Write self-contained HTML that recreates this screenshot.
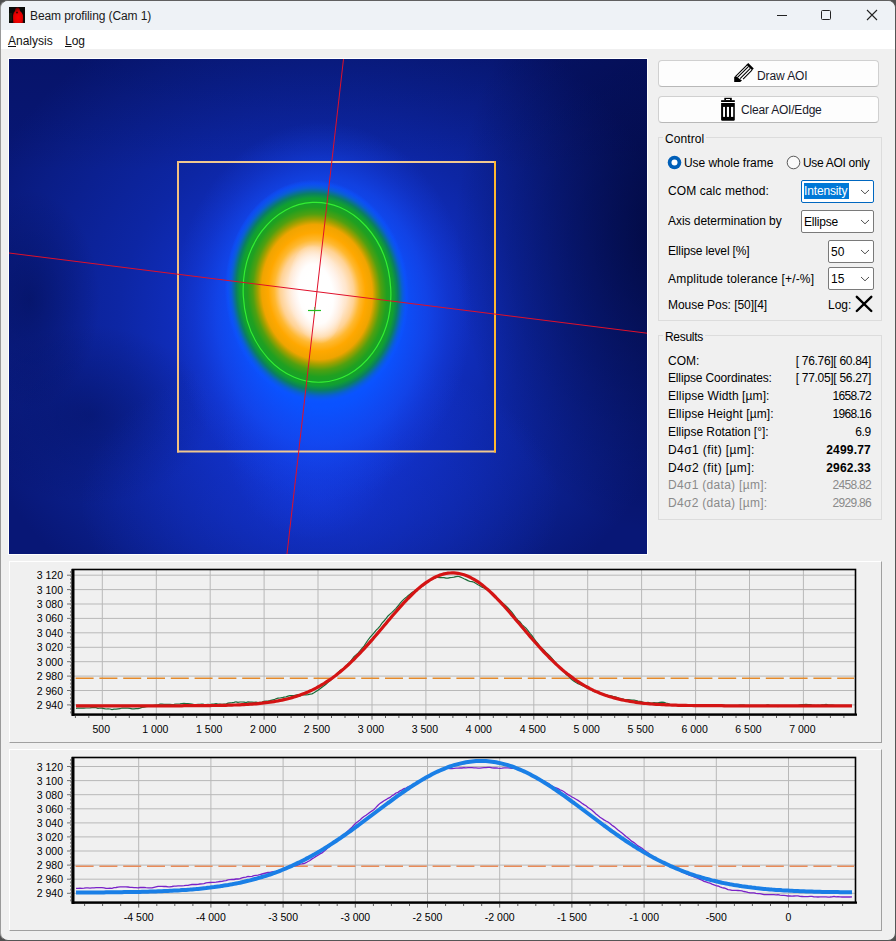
<!DOCTYPE html>
<html><head><meta charset="utf-8">
<style>
html,body{margin:0;padding:0;}
body{width:896px;height:941px;overflow:hidden;background:#505050;position:relative;font-family:"Liberation Sans",sans-serif;font-size:12px;color:#000;}
.win{position:absolute;left:0;top:0;width:894px;height:939px;border:1px solid #555;border-left-color:#9a9a9a;border-top-color:#606060;border-radius:8px;background:#f0f0f0;overflow:hidden;}
.abs{position:absolute;white-space:nowrap;}
.title{position:absolute;left:0;top:0;width:896px;height:29px;background:#eef2f6;}
.menu{position:absolute;left:0;top:29px;width:896px;height:19px;background:#ffffff;}
.btn{position:absolute;left:658px;width:221px;background:#fdfdfd;border:1px solid #d0d0d0;border-bottom-color:#b8b8b8;border-radius:4px;box-sizing:border-box;}
.grp{position:absolute;border:1px solid #dcdcdc;box-sizing:border-box;}
.gl{position:absolute;background:#f0f0f0;padding:0 2px;white-space:nowrap;}
.combo{position:absolute;background:#fff;border:1px solid #7a7a7a;border-radius:2px;box-sizing:border-box;}
.combo .chev{position:absolute;right:3px;top:8px;line-height:0;}
.lbl{position:absolute;white-space:nowrap;}
.res{position:absolute;left:668px;width:203px;height:18px;white-space:nowrap;}
.res .v{position:absolute;right:0;top:0;}
.panel{position:absolute;left:9px;width:873px;box-sizing:border-box;border-top:1px solid #ffffff;border-left:1px solid #ffffff;border-bottom:1px solid #a0a0a0;border-right:1px solid #a0a0a0;}
svg text{font-family:"Liberation Sans",sans-serif;font-size:10.5px;fill:#000;}
</style></head><body>
<div class="win">
 <div class="title"></div>
 <div class="menu"></div>
</div>
<!-- title icon -->
<svg class="abs" style="left:9px;top:7px" width="16" height="16" viewBox="0 0 16 16">
 <defs><radialGradient id="icg" cx="0.5" cy="0.65" r="0.6"><stop offset="0" stop-color="#ff0000"/><stop offset="0.7" stop-color="#e00000"/><stop offset="1" stop-color="#700000"/></radialGradient></defs>
 <rect width="16" height="16" fill="#0a0a08"/>
 <path d="M4 16 L4 8 Q4.5 5 6 4 Q6 0.5 8.5 0.5 Q11 0.5 11 4 Q12.8 5 14 8 L14.2 16 Z" fill="url(#icg)"/>
 <circle cx="8" cy="5.5" r="1.1" fill="#500000"/>
 <rect x="0" y="6" width="3" height="8" fill="#1a2a18" opacity="0.6"/>
</svg>
<div class="abs" style="left:30px;top:8.5px;font-size:12px;letter-spacing:-0.1px;color:#1a1a1a">Beam profiling (Cam 1)</div>
<!-- window controls -->
<div class="abs" style="left:777px;top:15px;width:10px;height:1px;background:#222"></div>
<div class="abs" style="left:821px;top:10px;width:8px;height:8px;border:1px solid #222;border-radius:1.5px"></div>
<svg class="abs" style="left:866px;top:9px" width="12" height="12" viewBox="0 0 12 12"><path d="M1 1 L11 11 M11 1 L1 11" stroke="#222" stroke-width="1.1"/></svg>
<!-- menu -->
<div class="abs" style="left:8px;top:34px;color:#111"><span style="text-decoration:underline">A</span>nalysis</div>
<div class="abs" style="left:65px;top:34px;color:#111"><span style="text-decoration:underline">L</span>og</div>

<!-- beam image -->
<svg class="abs" style="left:0;top:0" width="896" height="941" viewBox="0 0 896 941">
<rect x="8" y="58" width="640" height="497" fill="#ffffff"/>
<defs>
<radialGradient id="vig" gradientUnits="userSpaceOnUse" cx="0" cy="0" r="1" gradientTransform="translate(322 320) scale(370 340)">
<stop offset="0" stop-color="#1644e8"/>
<stop offset="0.3" stop-color="#1131c8"/>
<stop offset="0.55" stop-color="#0d26a4"/>
<stop offset="0.85" stop-color="#0a1d86"/>
<stop offset="1" stop-color="#081776"/>
</radialGradient>
<radialGradient id="dark" gradientUnits="userSpaceOnUse" cx="0" cy="0" r="1" gradientTransform="translate(665 235) scale(210 300)">
<stop offset="0" stop-color="#000530" stop-opacity="0.75"/>
<stop offset="0.55" stop-color="#000530" stop-opacity="0.35"/>
<stop offset="1" stop-color="#000530" stop-opacity="0"/>
</radialGradient>
<linearGradient id="topd" gradientUnits="userSpaceOnUse" x1="0" y1="59" x2="0" y2="170">
<stop offset="0" stop-color="#000840" stop-opacity="0.22"/>
<stop offset="1" stop-color="#000840" stop-opacity="0"/>
</linearGradient>
<radialGradient id="dark2" gradientUnits="userSpaceOnUse" cx="0" cy="0" r="1" gradientTransform="translate(90 415) scale(120 90)">
<stop offset="0" stop-color="#000840" stop-opacity="0.35"/>
<stop offset="1" stop-color="#000840" stop-opacity="0"/>
</radialGradient>
<radialGradient id="dark3" gradientUnits="userSpaceOnUse" cx="0" cy="0" r="1" gradientTransform="translate(30 300) scale(70 110)">
<stop offset="0" stop-color="#000840" stop-opacity="0.4"/>
<stop offset="1" stop-color="#000840" stop-opacity="0"/>
</radialGradient>
<radialGradient id="halo" gradientUnits="userSpaceOnUse" cx="0" cy="0" r="1" gradientTransform="translate(322 312) scale(150 190)">
<stop offset="0" stop-color="#0a55ff" stop-opacity="1"/>
<stop offset="0.5" stop-color="#0a52ff" stop-opacity="1"/>
<stop offset="0.7" stop-color="#124cf6" stop-opacity="0.65"/>
<stop offset="0.85" stop-color="#1444ea" stop-opacity="0.3"/>
<stop offset="1" stop-color="#1440e0" stop-opacity="0"/>
</radialGradient>
<radialGradient id="halo2" gradientUnits="userSpaceOnUse" cx="0" cy="0" r="1" gradientTransform="translate(312 430) scale(90 110)">
<stop offset="0" stop-color="#1448f8" stop-opacity="0.5"/>
<stop offset="1" stop-color="#1448f8" stop-opacity="0"/>
</radialGradient>
<radialGradient id="core" gradientUnits="userSpaceOnUse" cx="0" cy="0" r="1" gradientTransform="translate(317 292) rotate(-3) scale(92 112.5)">
<stop offset="0" stop-color="#ffffff"/>
<stop offset="0.16" stop-color="#ffffff"/>
<stop offset="0.24" stop-color="#fff2ea"/>
<stop offset="0.32" stop-color="#ffe6cc"/>
<stop offset="0.4" stop-color="#ffd294"/>
<stop offset="0.464" stop-color="#ffb830"/>
<stop offset="0.528" stop-color="#ffa800"/>
<stop offset="0.6" stop-color="#f0a400"/>
<stop offset="0.646" stop-color="#a0a000"/>
<stop offset="0.695" stop-color="#50a010"/>
<stop offset="0.755" stop-color="#20a020"/>
<stop offset="0.834" stop-color="#10a030"/>
<stop offset="0.876" stop-color="#0a8060"/>
<stop offset="0.925" stop-color="#0a60d0"/>
<stop offset="0.97" stop-color="#0a55ff" stop-opacity="0.5"/>
<stop offset="1" stop-color="#0a55ff" stop-opacity="0"/>
</radialGradient>
<radialGradient id="wcore" gradientUnits="userSpaceOnUse" cx="0" cy="0" r="1" gradientTransform="translate(316 294) rotate(-4) scale(28 50)">
<stop offset="0" stop-color="#ffffff" stop-opacity="1"/>
<stop offset="0.6" stop-color="#ffffff" stop-opacity="0.9"/>
<stop offset="0.85" stop-color="#fff4ee" stop-opacity="0.4"/>
<stop offset="1" stop-color="#fff0e0" stop-opacity="0"/>
</radialGradient>
<radialGradient id="botg" gradientUnits="userSpaceOnUse" cx="0" cy="0" r="1" gradientTransform="translate(320 500) scale(240 150)">
<stop offset="0" stop-color="#1a42ff" stop-opacity="0.45"/>
<stop offset="0.6" stop-color="#1a42ff" stop-opacity="0.2"/>
<stop offset="1" stop-color="#1a42ff" stop-opacity="0"/>
</radialGradient>
</defs>
<rect x="9" y="59" width="638" height="495" fill="url(#vig)"/>
<rect x="9" y="59" width="638" height="495" fill="url(#dark)"/>
<rect x="9" y="59" width="638" height="495" fill="url(#topd)"/>
<rect x="9" y="59" width="638" height="495" fill="url(#dark2)"/>
<rect x="9" y="59" width="638" height="495" fill="url(#dark3)"/>
<rect x="9" y="59" width="638" height="495" fill="url(#botg)"/>
<ellipse cx="312" cy="430" rx="90" ry="110" fill="url(#halo2)"/>
<ellipse cx="322" cy="312" rx="150" ry="190" fill="url(#halo)"/>
<ellipse cx="317" cy="292" rx="92" ry="112.5" fill="url(#core)" transform="rotate(-3 317 292)"/>
<ellipse cx="316" cy="294" rx="28" ry="50" fill="url(#wcore)" transform="rotate(-4 316 294)"/>
<ellipse cx="317" cy="292.3" rx="73.8" ry="90" fill="none" stroke="#33ee33" stroke-width="1.2" transform="rotate(-3 317 292)"/>
<line x1="177" y1="162" x2="496" y2="162" stroke="#f0c890" stroke-width="2"/>
<line x1="177" y1="451.5" x2="496" y2="451.5" stroke="#f0c890" stroke-width="2"/>
<line x1="178" y1="161" x2="178" y2="452.5" stroke="#f3c080" stroke-width="2"/>
<line x1="495" y1="161" x2="495" y2="452.5" stroke="#ffb830" stroke-width="2"/>
<line x1="343.5" y1="59" x2="287" y2="554" stroke="#e0102a" stroke-width="1"/>
<line x1="9" y1="253" x2="647" y2="333.2" stroke="#e0102a" stroke-width="1"/>
<line x1="308" y1="310.5" x2="321" y2="310.5" stroke="#20c020" stroke-width="1.2"/>
<line x1="314.5" y1="307" x2="314.5" y2="314" stroke="#20c020" stroke-width="0.6"/>
</svg>

<!-- buttons -->
<div class="btn" style="top:60px;height:27px"></div>
<svg class="abs" style="left:728px;top:60px" width="30" height="26" viewBox="728 60 30 26">
 <path d="M735.6 76.4 L747.4 64.6 M737.3 77.7 L748.6 66.4 M740.1 78.6 L750.3 68.4 M743.1 79.1 L752 70.2" stroke="#000" stroke-width="1.05"/>
 <path d="M747.4 63.9 L752.9 69.4" stroke="#000" stroke-width="2.4" stroke-linecap="butt"/>
 <path d="M734.2 77 L734.2 81.9 L740.2 81.9 L742 80.6 L737.6 77.6 L735.8 76 Z" fill="#000"/>
</svg>
<div class="abs" style="left:757px;top:69px;letter-spacing:-0.1px;color:#1a1a2a">Draw AOI</div>
<div class="btn" style="top:96px;height:27px"></div>
<svg class="abs" style="left:716px;top:94px" width="26" height="30" viewBox="716 94 26 30">
 <rect x="724.3" y="97.8" width="7.5" height="2.8" fill="#000"/>
 <rect x="726" y="99" width="4" height="1" fill="#fff"/>
 <rect x="721.1" y="100.2" width="13.7" height="1.8" fill="#000"/>
 <path d="M721.1 103.1 L734.8 103.1 L734.8 120 L734 120.8 L721.9 120.8 L721.1 120 Z" fill="#000"/>
 <rect x="723.1" y="106.9" width="1.9" height="10" fill="#fff"/>
 <rect x="726.9" y="106.9" width="2.1" height="10" fill="#fff"/>
 <rect x="731" y="106.9" width="2.2" height="10" fill="#fff"/>
</svg>
<div class="abs" style="left:741px;top:103px;letter-spacing:-0.2px;color:#1a1a2a">Clear AOI/Edge</div>

<!-- control group -->
<div class="grp" style="left:658px;top:137px;width:224px;height:184px"></div>
<div class="gl" style="left:663px;top:131.5px;letter-spacing:0.1px">Control</div>
<svg class="abs" style="left:667px;top:155px" width="15" height="15" viewBox="0 0 15 15"><circle cx="7.5" cy="7.5" r="6.8" fill="#005fb8"/><circle cx="7.5" cy="7.5" r="3" fill="#fff"/></svg>
<div class="lbl" style="left:684px;top:156px;letter-spacing:-0.05px">Use whole frame</div>
<svg class="abs" style="left:786px;top:155px" width="15" height="15" viewBox="0 0 15 15"><circle cx="7.5" cy="7.5" r="6.3" fill="#fafafa" stroke="#5a5a5a" stroke-width="1"/></svg>
<div class="lbl" style="left:803px;top:156px;letter-spacing:-0.3px">Use AOI only</div>

<div class="lbl" style="left:668px;top:184px;letter-spacing:0.1px">COM calc method:</div>
<div class="combo" style="left:801px;top:180px;width:73px;height:23px;border-color:#0067c0;border-width:1px"><div style="position:absolute;left:2px;top:2px;width:45px;height:16px;background:#0078d7"></div><div class="abs" style="left:2px;top:3px;color:#fff;letter-spacing:-0.15px">Intensity</div><div class="chev" style="top:8px"><svg width="10" height="6" viewBox="0 0 10 6"><path d="M1 1 L5 4.8 L9 1" fill="none" stroke="#505050" stroke-width="1"/></svg></div></div>
<div class="lbl" style="left:668px;top:214px;letter-spacing:-0.05px">Axis determination by</div>
<div class="combo" style="left:801px;top:210px;width:73px;height:23px"><div class="abs" style="left:2px;top:4px;letter-spacing:-0.2px">Ellipse</div><div class="chev"><svg width="10" height="6" viewBox="0 0 10 6"><path d="M1 1 L5 4.8 L9 1" fill="none" stroke="#505050" stroke-width="1"/></svg></div></div>
<div class="lbl" style="left:668px;top:244px;letter-spacing:-0.15px">Ellipse level [%]</div>
<div class="combo" style="left:828px;top:240px;width:46px;height:23px"><div class="abs" style="left:2px;top:4px">50</div><div class="chev"><svg width="10" height="6" viewBox="0 0 10 6"><path d="M1 1 L5 4.8 L9 1" fill="none" stroke="#505050" stroke-width="1"/></svg></div></div>
<div class="lbl" style="left:668px;top:272px;letter-spacing:0.2px">Amplitude tolerance [+/-%]</div>
<div class="combo" style="left:828px;top:267px;width:46px;height:23px"><div class="abs" style="left:2px;top:4px">15</div><div class="chev"><svg width="10" height="6" viewBox="0 0 10 6"><path d="M1 1 L5 4.8 L9 1" fill="none" stroke="#505050" stroke-width="1"/></svg></div></div>
<div class="lbl" style="left:668px;top:298px;letter-spacing:-0.05px">Mouse Pos: [50][4]</div>
<div class="lbl" style="left:828px;top:298px;letter-spacing:0px">Log:</div>
<svg class="abs" style="left:850px;top:290px" width="30" height="28" viewBox="850 290 30 28"><path d="M856.8 296.8 L871.3 311 M871.3 296.8 L856.8 311" stroke="#000" stroke-width="2.4" stroke-linecap="round"/></svg>

<!-- results group -->
<div class="grp" style="left:658px;top:335px;width:224px;height:185px"></div>
<div class="gl" style="left:663px;top:329.5px;letter-spacing:-0.3px">Results</div>
<div class="res" style="top:353.50px">COM:<span class="v" style="letter-spacing:-0.3px">[ 76.76][ 60.84]</span></div>
<div class="res" style="top:371.35px;letter-spacing:-0.15px">Ellipse Coordinates:<span class="v" style="letter-spacing:-0.3px">[ 77.05][ 56.27]</span></div>
<div class="res" style="top:389.20px;letter-spacing:0.1px">Ellipse Width [µm]:<span class="v" style="letter-spacing:-0.7px">1658.72</span></div>
<div class="res" style="top:407.05px;letter-spacing:0.1px">Ellipse Height [µm]:<span class="v" style="letter-spacing:-0.7px">1968.16</span></div>
<div class="res" style="top:424.90px;letter-spacing:-0.05px">Ellipse Rotation [°]:<span class="v" style="letter-spacing:-0.3px">6.9</span></div>
<div class="res" style="top:442.75px;letter-spacing:0.4px">D4σ1 (fit) [µm]:<span class="v" style="font-weight:bold;letter-spacing:0.2px">2499.77</span></div>
<div class="res" style="top:460.60px;letter-spacing:0.4px">D4σ2 (fit) [µm]:<span class="v" style="font-weight:bold;letter-spacing:0.2px">2962.33</span></div>
<div class="res" style="top:478.45px;color:#8a8a8a;letter-spacing:0.3px">D4σ1 (data) [µm]:<span class="v" style="letter-spacing:-0.7px">2458.82</span></div>
<div class="res" style="top:496.30px;color:#8a8a8a;letter-spacing:0.3px">D4σ2 (data) [µm]:<span class="v" style="letter-spacing:-0.7px">2929.86</span></div>

<!-- chart panels -->
<div class="panel" style="top:561px;height:182px"></div>
<div class="panel" style="top:749px;height:182px"></div>
<svg class="abs" style="left:0;top:0" width="896" height="941" viewBox="0 0 896 941">
<rect x="72" y="569" width="784" height="146" fill="#f0f0f0"/>
<line x1="72" y1="704.9" x2="856" y2="704.9" stroke="#b8b8b8" stroke-width="1"/>
<line x1="72" y1="690.5" x2="856" y2="690.5" stroke="#b8b8b8" stroke-width="1"/>
<line x1="72" y1="676.1" x2="856" y2="676.1" stroke="#b8b8b8" stroke-width="1"/>
<line x1="72" y1="661.7" x2="856" y2="661.7" stroke="#b8b8b8" stroke-width="1"/>
<line x1="72" y1="647.3" x2="856" y2="647.3" stroke="#b8b8b8" stroke-width="1"/>
<line x1="72" y1="632.8" x2="856" y2="632.8" stroke="#b8b8b8" stroke-width="1"/>
<line x1="72" y1="618.4" x2="856" y2="618.4" stroke="#b8b8b8" stroke-width="1"/>
<line x1="72" y1="604.0" x2="856" y2="604.0" stroke="#b8b8b8" stroke-width="1"/>
<line x1="72" y1="589.6" x2="856" y2="589.6" stroke="#b8b8b8" stroke-width="1"/>
<line x1="72" y1="575.2" x2="856" y2="575.2" stroke="#b8b8b8" stroke-width="1"/>
<line x1="102.3" y1="569" x2="102.3" y2="715" stroke="#b8b8b8" stroke-width="1"/>
<line x1="156.3" y1="569" x2="156.3" y2="715" stroke="#b8b8b8" stroke-width="1"/>
<line x1="210.2" y1="569" x2="210.2" y2="715" stroke="#b8b8b8" stroke-width="1"/>
<line x1="264.1" y1="569" x2="264.1" y2="715" stroke="#b8b8b8" stroke-width="1"/>
<line x1="318.0" y1="569" x2="318.0" y2="715" stroke="#b8b8b8" stroke-width="1"/>
<line x1="372.0" y1="569" x2="372.0" y2="715" stroke="#b8b8b8" stroke-width="1"/>
<line x1="425.9" y1="569" x2="425.9" y2="715" stroke="#b8b8b8" stroke-width="1"/>
<line x1="479.8" y1="569" x2="479.8" y2="715" stroke="#b8b8b8" stroke-width="1"/>
<line x1="533.8" y1="569" x2="533.8" y2="715" stroke="#b8b8b8" stroke-width="1"/>
<line x1="587.7" y1="569" x2="587.7" y2="715" stroke="#b8b8b8" stroke-width="1"/>
<line x1="641.6" y1="569" x2="641.6" y2="715" stroke="#b8b8b8" stroke-width="1"/>
<line x1="695.6" y1="569" x2="695.6" y2="715" stroke="#b8b8b8" stroke-width="1"/>
<line x1="749.5" y1="569" x2="749.5" y2="715" stroke="#b8b8b8" stroke-width="1"/>
<line x1="803.4" y1="569" x2="803.4" y2="715" stroke="#b8b8b8" stroke-width="1"/>
<line x1="75.6" y1="678.3" x2="854" y2="678.3" stroke="#e48a2a" stroke-width="1.5" stroke-dasharray="18,5.8"/>
<path d="M76.0,708.3 L78.0,708.0 L80.0,708.2 L82.0,708.2 L84.0,708.1 L86.0,708.0 L88.0,708.0 L90.0,707.9 L92.0,707.7 L94.0,707.7 L96.0,707.6 L98.0,708.3 L100.0,708.0 L102.0,708.2 L104.0,708.6 L106.0,709.0 L108.0,708.8 L110.0,709.0 L112.0,709.6 L114.0,709.2 L116.0,709.1 L118.0,708.9 L120.0,708.7 L122.0,708.0 L124.0,708.2 L126.0,708.1 L128.0,708.1 L130.0,708.4 L132.0,708.8 L134.0,708.9 L136.0,708.7 L138.0,708.6 L140.0,708.1 L142.0,707.4 L144.0,707.2 L146.0,706.6 L148.0,706.4 L150.0,706.4 L152.0,706.1 L154.0,705.4 L156.0,705.2 L158.0,705.1 L160.0,704.0 L162.0,704.1 L164.0,704.3 L166.0,704.3 L168.0,704.3 L170.0,704.4 L172.0,704.7 L174.0,704.4 L176.0,704.0 L178.0,704.0 L180.0,703.9 L182.0,703.5 L184.0,703.4 L186.0,703.6 L188.0,703.6 L190.0,703.9 L192.0,704.2 L194.0,704.5 L196.0,704.5 L198.0,704.3 L200.0,704.3 L202.0,704.0 L204.0,704.4 L206.0,704.5 L208.0,704.4 L210.0,704.5 L212.0,704.1 L214.0,704.0 L216.0,703.7 L218.0,704.1 L220.0,704.2 L222.0,704.3 L224.0,704.0 L226.0,704.0 L228.0,703.2 L230.0,702.8 L232.0,702.7 L234.0,702.4 L236.0,701.8 L238.0,702.3 L240.0,702.0 L242.0,702.0 L244.0,702.1 L246.0,702.6 L248.0,701.9 L250.0,702.1 L252.0,702.2 L254.0,702.4 L256.0,702.2 L258.0,702.6 L260.0,702.3 L262.0,702.0 L264.0,701.3 L266.0,701.1 L268.0,701.0 L270.0,700.6 L272.0,700.1 L274.0,699.7 L276.0,698.8 L278.0,698.1 L280.0,698.0 L282.0,697.7 L284.0,697.1 L286.0,696.8 L288.0,696.2 L290.0,695.7 L292.0,695.6 L294.0,695.6 L296.0,695.1 L298.0,694.6 L300.0,695.8 L302.0,694.9 L304.0,694.8 L306.0,694.8 L308.0,694.6 L310.0,694.2 L312.0,693.9 L314.0,692.8 L316.0,691.5 L318.0,690.3 L320.0,688.7 L322.0,687.2 L324.0,685.7 L326.0,684.3 L328.0,682.4 L330.0,680.7 L332.0,678.8 L334.0,676.8 L336.0,674.8 L338.0,672.7 L340.0,670.5 L342.0,669.5 L344.0,668.2 L346.0,666.3 L348.0,664.0 L350.0,662.0 L352.0,659.4 L354.0,656.7 L356.0,654.9 L358.0,653.1 L360.0,650.8 L362.0,648.5 L364.0,646.1 L366.0,643.0 L368.0,640.0 L370.0,637.4 L372.0,635.2 L374.0,632.8 L376.0,630.3 L378.0,628.3 L380.0,626.1 L382.0,623.1 L384.0,621.0 L386.0,618.7 L388.0,616.0 L390.0,614.1 L392.0,612.4 L394.0,610.3 L396.0,608.3 L398.0,606.0 L400.0,603.3 L402.0,601.2 L404.0,599.1 L406.0,597.6 L408.0,595.8 L410.0,594.1 L412.0,592.4 L414.0,591.2 L416.0,589.7 L418.0,588.7 L420.0,587.8 L422.0,586.5 L424.0,584.7 L426.0,583.3 L428.0,582.0 L430.0,580.4 L432.0,579.1 L434.0,578.4 L436.0,577.5 L438.0,577.3 L440.0,577.6 L442.0,577.5 L444.0,577.7 L446.0,578.1 L448.0,578.2 L450.0,577.7 L452.0,577.5 L454.0,577.1 L456.0,576.6 L458.0,576.3 L460.0,576.9 L462.0,577.8 L464.0,578.8 L466.0,579.6 L468.0,580.6 L470.0,581.5 L472.0,581.6 L474.0,582.3 L476.0,583.6 L478.0,584.7 L480.0,585.7 L482.0,587.2 L484.0,588.0 L486.0,589.2 L488.0,590.2 L490.0,591.7 L492.0,593.7 L494.0,595.6 L496.0,597.0 L498.0,599.3 L500.0,601.1 L502.0,602.4 L504.0,604.2 L506.0,606.0 L508.0,608.0 L510.0,610.2 L512.0,612.4 L514.0,615.1 L516.0,618.0 L518.0,620.1 L520.0,622.0 L522.0,624.7 L524.0,626.5 L526.0,628.1 L528.0,630.7 L530.0,633.3 L532.0,635.7 L534.0,638.7 L536.0,641.4 L538.0,643.7 L540.0,646.3 L542.0,648.4 L544.0,650.2 L546.0,652.4 L548.0,654.1 L550.0,656.2 L552.0,658.5 L554.0,660.8 L556.0,662.8 L558.0,665.5 L560.0,667.4 L562.0,669.6 L564.0,671.7 L566.0,674.3 L568.0,675.7 L570.0,678.0 L572.0,679.7 L574.0,681.3 L576.0,682.5 L578.0,683.6 L580.0,684.5 L582.0,685.5 L584.0,686.2 L586.0,687.4 L588.0,688.4 L590.0,689.3 L592.0,690.5 L594.0,691.6 L596.0,691.9 L598.0,692.7 L600.0,693.3 L602.0,694.0 L604.0,694.2 L606.0,695.0 L608.0,695.3 L610.0,695.5 L612.0,696.0 L614.0,696.7 L616.0,697.1 L618.0,697.9 L620.0,698.8 L622.0,698.9 L624.0,699.3 L626.0,699.6 L628.0,699.7 L630.0,699.8 L632.0,700.0 L634.0,700.2 L636.0,700.5 L638.0,701.1 L640.0,701.3 L642.0,701.9 L644.0,702.5 L646.0,702.5 L648.0,702.4 L650.0,702.9 L652.0,703.1 L654.0,702.6 L656.0,702.8 L658.0,702.9 L660.0,702.4 L662.0,702.2 L664.0,702.3 L666.0,703.0 L668.0,703.5 L670.0,704.4 L672.0,704.5 L674.0,705.2 L676.0,705.5 L678.0,705.2 L680.0,705.4 L682.0,706.0 L684.0,705.7 L686.0,706.0 L688.0,706.2 L690.0,705.9 L692.0,706.0 L694.0,706.5 L696.0,705.9 L698.0,705.9 L700.0,706.0 L702.0,705.5 L704.0,705.0 L706.0,705.1 L708.0,705.4 L710.0,705.0 L712.0,705.2 L714.0,705.4 L716.0,705.1 L718.0,704.8 L720.0,705.3 L722.0,705.3 L724.0,705.0 L726.0,705.8 L728.0,706.1 L730.0,706.4 L732.0,706.1 L734.0,706.3 L736.0,705.5 L738.0,705.5 L740.0,705.0 L742.0,705.0 L744.0,705.1 L746.0,705.8 L748.0,705.8 L750.0,705.8 L752.0,705.8 L754.0,706.2 L756.0,706.0 L758.0,705.9 L760.0,705.7 L762.0,705.7 L764.0,705.5 L766.0,705.4 L768.0,704.9 L770.0,705.5 L772.0,706.0 L774.0,706.1 L776.0,705.8 L778.0,706.5 L780.0,705.8 L782.0,705.9 L784.0,705.7 L786.0,705.9 L788.0,705.6 L790.0,706.3 L792.0,705.8 L794.0,705.6 L796.0,705.7 L798.0,705.5 L800.0,704.8 L802.0,704.7 L804.0,704.7 L806.0,704.4 L808.0,704.5 L810.0,704.6 L812.0,705.1 L814.0,705.3 L816.0,705.5 L818.0,705.4 L820.0,705.5 L822.0,704.9 L824.0,704.8 L826.0,704.4 L828.0,704.9 L830.0,705.1 L832.0,705.2 L834.0,705.4 L836.0,706.1 L838.0,705.6 L840.0,705.8 L842.0,706.0 L844.0,706.0 L846.0,705.9 L848.0,706.2 L850.0,706.0 L852.0,706.1" fill="none" stroke="#1a6a38" stroke-width="1.2"/>
<path d="M76.0,705.8 L78.0,705.8 L80.0,705.8 L82.0,705.8 L84.0,705.8 L86.0,705.8 L88.0,705.8 L90.0,705.8 L92.0,705.8 L94.0,705.8 L96.0,705.8 L98.0,705.8 L100.0,705.8 L102.0,705.8 L104.0,705.8 L106.0,705.8 L108.0,705.8 L110.0,705.8 L112.0,705.8 L114.0,705.8 L116.0,705.8 L118.0,705.8 L120.0,705.8 L122.0,705.8 L124.0,705.8 L126.0,705.8 L128.0,705.8 L130.0,705.8 L132.0,705.8 L134.0,705.8 L136.0,705.8 L138.0,705.8 L140.0,705.8 L142.0,705.8 L144.0,705.8 L146.0,705.8 L148.0,705.8 L150.0,705.8 L152.0,705.8 L154.0,705.8 L156.0,705.8 L158.0,705.8 L160.0,705.8 L162.0,705.8 L164.0,705.8 L166.0,705.8 L168.0,705.8 L170.0,705.8 L172.0,705.8 L174.0,705.8 L176.0,705.8 L178.0,705.8 L180.0,705.8 L182.0,705.8 L184.0,705.7 L186.0,705.7 L188.0,705.7 L190.0,705.7 L192.0,705.7 L194.0,705.7 L196.0,705.7 L198.0,705.7 L200.0,705.7 L202.0,705.6 L204.0,705.6 L206.0,705.6 L208.0,705.6 L210.0,705.6 L212.0,705.5 L214.0,705.5 L216.0,705.5 L218.0,705.5 L220.0,705.4 L222.0,705.4 L224.0,705.3 L226.0,705.3 L228.0,705.2 L230.0,705.2 L232.0,705.1 L234.0,705.0 L236.0,705.0 L238.0,704.9 L240.0,704.8 L242.0,704.7 L244.0,704.6 L246.0,704.5 L248.0,704.4 L250.0,704.2 L252.0,704.1 L254.0,703.9 L256.0,703.8 L258.0,703.6 L260.0,703.4 L262.0,703.2 L264.0,702.9 L266.0,702.7 L268.0,702.5 L270.0,702.2 L272.0,701.9 L274.0,701.6 L276.0,701.2 L278.0,700.9 L280.0,700.5 L282.0,700.1 L284.0,699.6 L286.0,699.2 L288.0,698.7 L290.0,698.2 L292.0,697.6 L294.0,697.0 L296.0,696.4 L298.0,695.7 L300.0,695.1 L302.0,694.3 L304.0,693.6 L306.0,692.7 L308.0,691.9 L310.0,691.0 L312.0,690.1 L314.0,689.1 L316.0,688.1 L318.0,687.0 L320.0,685.9 L322.0,684.7 L324.0,683.5 L326.0,682.2 L328.0,680.9 L330.0,679.6 L332.0,678.2 L334.0,676.7 L336.0,675.2 L338.0,673.6 L340.0,672.0 L342.0,670.3 L344.0,668.6 L346.0,666.8 L348.0,665.0 L350.0,663.1 L352.0,661.2 L354.0,659.3 L356.0,657.2 L358.0,655.2 L360.0,653.1 L362.0,651.0 L364.0,648.8 L366.0,646.6 L368.0,644.4 L370.0,642.1 L372.0,639.9 L374.0,637.5 L376.0,635.2 L378.0,632.9 L380.0,630.5 L382.0,628.2 L384.0,625.8 L386.0,623.4 L388.0,621.0 L390.0,618.7 L392.0,616.3 L394.0,614.0 L396.0,611.7 L398.0,609.4 L400.0,607.2 L402.0,604.9 L404.0,602.7 L406.0,600.6 L408.0,598.5 L410.0,596.5 L412.0,594.5 L414.0,592.6 L416.0,590.7 L418.0,588.9 L420.0,587.2 L422.0,585.6 L424.0,584.1 L426.0,582.6 L428.0,581.3 L430.0,580.0 L432.0,578.8 L434.0,577.7 L436.0,576.8 L438.0,575.9 L440.0,575.1 L442.0,574.5 L444.0,573.9 L446.0,573.5 L448.0,573.2 L450.0,573.0 L452.0,572.9 L454.0,572.9 L456.0,573.1 L458.0,573.3 L460.0,573.7 L462.0,574.2 L464.0,574.8 L466.0,575.5 L468.0,576.3 L470.0,577.2 L472.0,578.3 L474.0,579.4 L476.0,580.6 L478.0,581.9 L480.0,583.3 L482.0,584.8 L484.0,586.4 L486.0,588.1 L488.0,589.8 L490.0,591.6 L492.0,593.5 L494.0,595.5 L496.0,597.5 L498.0,599.6 L500.0,601.7 L502.0,603.8 L504.0,606.0 L506.0,608.3 L508.0,610.5 L510.0,612.8 L512.0,615.2 L514.0,617.5 L516.0,619.9 L518.0,622.2 L520.0,624.6 L522.0,627.0 L524.0,629.3 L526.0,631.7 L528.0,634.0 L530.0,636.4 L532.0,638.7 L534.0,641.0 L536.0,643.3 L538.0,645.5 L540.0,647.7 L542.0,649.9 L544.0,652.1 L546.0,654.2 L548.0,656.2 L550.0,658.3 L552.0,660.2 L554.0,662.2 L556.0,664.1 L558.0,665.9 L560.0,667.7 L562.0,669.5 L564.0,671.2 L566.0,672.8 L568.0,674.4 L570.0,675.9 L572.0,677.4 L574.0,678.9 L576.0,680.3 L578.0,681.6 L580.0,682.9 L582.0,684.1 L584.0,685.3 L586.0,686.5 L588.0,687.5 L590.0,688.6 L592.0,689.6 L594.0,690.6 L596.0,691.5 L598.0,692.3 L600.0,693.2 L602.0,693.9 L604.0,694.7 L606.0,695.4 L608.0,696.1 L610.0,696.7 L612.0,697.3 L614.0,697.9 L616.0,698.4 L618.0,698.9 L620.0,699.4 L622.0,699.9 L624.0,700.3 L626.0,700.7 L628.0,701.0 L630.0,701.4 L632.0,701.7 L634.0,702.0 L636.0,702.3 L638.0,702.6 L640.0,702.8 L642.0,703.1 L644.0,703.3 L646.0,703.5 L648.0,703.7 L650.0,703.8 L652.0,704.0 L654.0,704.2 L656.0,704.3 L658.0,704.4 L660.0,704.5 L662.0,704.6 L664.0,704.7 L666.0,704.8 L668.0,704.9 L670.0,705.0 L672.0,705.1 L674.0,705.1 L676.0,705.2 L678.0,705.3 L680.0,705.3 L682.0,705.4 L684.0,705.4 L686.0,705.4 L688.0,705.5 L690.0,705.5 L692.0,705.5 L694.0,705.6 L696.0,705.6 L698.0,705.6 L700.0,705.6 L702.0,705.6 L704.0,705.7 L706.0,705.7 L708.0,705.7 L710.0,705.7 L712.0,705.7 L714.0,705.7 L716.0,705.7 L718.0,705.7 L720.0,705.7 L722.0,705.7 L724.0,705.8 L726.0,705.8 L728.0,705.8 L730.0,705.8 L732.0,705.8 L734.0,705.8 L736.0,705.8 L738.0,705.8 L740.0,705.8 L742.0,705.8 L744.0,705.8 L746.0,705.8 L748.0,705.8 L750.0,705.8 L752.0,705.8 L754.0,705.8 L756.0,705.8 L758.0,705.8 L760.0,705.8 L762.0,705.8 L764.0,705.8 L766.0,705.8 L768.0,705.8 L770.0,705.8 L772.0,705.8 L774.0,705.8 L776.0,705.8 L778.0,705.8 L780.0,705.8 L782.0,705.8 L784.0,705.8 L786.0,705.8 L788.0,705.8 L790.0,705.8 L792.0,705.8 L794.0,705.8 L796.0,705.8 L798.0,705.8 L800.0,705.8 L802.0,705.8 L804.0,705.8 L806.0,705.8 L808.0,705.8 L810.0,705.8 L812.0,705.8 L814.0,705.8 L816.0,705.8 L818.0,705.8 L820.0,705.8 L822.0,705.8 L824.0,705.8 L826.0,705.8 L828.0,705.8 L830.0,705.8 L832.0,705.8 L834.0,705.8 L836.0,705.8 L838.0,705.8 L840.0,705.8 L842.0,705.8 L844.0,705.8 L846.0,705.8 L848.0,705.8 L850.0,705.8 L852.0,705.8" fill="none" stroke="#d41414" stroke-width="3.2" stroke-linejoin="round"/>
<rect x="72.5" y="569.5" width="783" height="145" fill="none" stroke="#000" stroke-width="1.6"/>
<line x1="73" y1="569" x2="73" y2="716" stroke="#000" stroke-width="3"/>
<line x1="72" y1="714.7" x2="857" y2="714.7" stroke="#000" stroke-width="2.2"/>
<line x1="67" y1="704.9" x2="72" y2="704.9" stroke="#707070" stroke-width="1"/>
<line x1="67" y1="690.5" x2="72" y2="690.5" stroke="#707070" stroke-width="1"/>
<line x1="67" y1="676.1" x2="72" y2="676.1" stroke="#707070" stroke-width="1"/>
<line x1="67" y1="661.7" x2="72" y2="661.7" stroke="#707070" stroke-width="1"/>
<line x1="67" y1="647.3" x2="72" y2="647.3" stroke="#707070" stroke-width="1"/>
<line x1="67" y1="632.8" x2="72" y2="632.8" stroke="#707070" stroke-width="1"/>
<line x1="67" y1="618.4" x2="72" y2="618.4" stroke="#707070" stroke-width="1"/>
<line x1="67" y1="604.0" x2="72" y2="604.0" stroke="#707070" stroke-width="1"/>
<line x1="67" y1="589.6" x2="72" y2="589.6" stroke="#707070" stroke-width="1"/>
<line x1="67" y1="575.2" x2="72" y2="575.2" stroke="#707070" stroke-width="1"/>
<line x1="70.5" y1="571" x2="70.5" y2="715" stroke="#909090" stroke-width="1" stroke-dasharray="2,1.6"/>
<line x1="75.4" y1="716" x2="75.4" y2="718" stroke="#606060" stroke-width="1"/>
<line x1="88.8" y1="716" x2="88.8" y2="718" stroke="#606060" stroke-width="1"/>
<line x1="102.3" y1="716" x2="102.3" y2="719.6" stroke="#606060" stroke-width="1"/>
<line x1="115.8" y1="716" x2="115.8" y2="718" stroke="#606060" stroke-width="1"/>
<line x1="129.3" y1="716" x2="129.3" y2="718" stroke="#606060" stroke-width="1"/>
<line x1="142.8" y1="716" x2="142.8" y2="718" stroke="#606060" stroke-width="1"/>
<line x1="156.3" y1="716" x2="156.3" y2="719.6" stroke="#606060" stroke-width="1"/>
<line x1="169.7" y1="716" x2="169.7" y2="718" stroke="#606060" stroke-width="1"/>
<line x1="183.2" y1="716" x2="183.2" y2="718" stroke="#606060" stroke-width="1"/>
<line x1="196.7" y1="716" x2="196.7" y2="718" stroke="#606060" stroke-width="1"/>
<line x1="210.2" y1="716" x2="210.2" y2="719.6" stroke="#606060" stroke-width="1"/>
<line x1="223.7" y1="716" x2="223.7" y2="718" stroke="#606060" stroke-width="1"/>
<line x1="237.2" y1="716" x2="237.2" y2="718" stroke="#606060" stroke-width="1"/>
<line x1="250.6" y1="716" x2="250.6" y2="718" stroke="#606060" stroke-width="1"/>
<line x1="264.1" y1="716" x2="264.1" y2="719.6" stroke="#606060" stroke-width="1"/>
<line x1="277.6" y1="716" x2="277.6" y2="718" stroke="#606060" stroke-width="1"/>
<line x1="291.1" y1="716" x2="291.1" y2="718" stroke="#606060" stroke-width="1"/>
<line x1="304.6" y1="716" x2="304.6" y2="718" stroke="#606060" stroke-width="1"/>
<line x1="318.0" y1="716" x2="318.0" y2="719.6" stroke="#606060" stroke-width="1"/>
<line x1="331.5" y1="716" x2="331.5" y2="718" stroke="#606060" stroke-width="1"/>
<line x1="345.0" y1="716" x2="345.0" y2="718" stroke="#606060" stroke-width="1"/>
<line x1="358.5" y1="716" x2="358.5" y2="718" stroke="#606060" stroke-width="1"/>
<line x1="372.0" y1="716" x2="372.0" y2="719.6" stroke="#606060" stroke-width="1"/>
<line x1="385.5" y1="716" x2="385.5" y2="718" stroke="#606060" stroke-width="1"/>
<line x1="398.9" y1="716" x2="398.9" y2="718" stroke="#606060" stroke-width="1"/>
<line x1="412.4" y1="716" x2="412.4" y2="718" stroke="#606060" stroke-width="1"/>
<line x1="425.9" y1="716" x2="425.9" y2="719.6" stroke="#606060" stroke-width="1"/>
<line x1="439.4" y1="716" x2="439.4" y2="718" stroke="#606060" stroke-width="1"/>
<line x1="452.9" y1="716" x2="452.9" y2="718" stroke="#606060" stroke-width="1"/>
<line x1="466.4" y1="716" x2="466.4" y2="718" stroke="#606060" stroke-width="1"/>
<line x1="479.8" y1="716" x2="479.8" y2="719.6" stroke="#606060" stroke-width="1"/>
<line x1="493.3" y1="716" x2="493.3" y2="718" stroke="#606060" stroke-width="1"/>
<line x1="506.8" y1="716" x2="506.8" y2="718" stroke="#606060" stroke-width="1"/>
<line x1="520.3" y1="716" x2="520.3" y2="718" stroke="#606060" stroke-width="1"/>
<line x1="533.8" y1="716" x2="533.8" y2="719.6" stroke="#606060" stroke-width="1"/>
<line x1="547.3" y1="716" x2="547.3" y2="718" stroke="#606060" stroke-width="1"/>
<line x1="560.7" y1="716" x2="560.7" y2="718" stroke="#606060" stroke-width="1"/>
<line x1="574.2" y1="716" x2="574.2" y2="718" stroke="#606060" stroke-width="1"/>
<line x1="587.7" y1="716" x2="587.7" y2="719.6" stroke="#606060" stroke-width="1"/>
<line x1="601.2" y1="716" x2="601.2" y2="718" stroke="#606060" stroke-width="1"/>
<line x1="614.7" y1="716" x2="614.7" y2="718" stroke="#606060" stroke-width="1"/>
<line x1="628.1" y1="716" x2="628.1" y2="718" stroke="#606060" stroke-width="1"/>
<line x1="641.6" y1="716" x2="641.6" y2="719.6" stroke="#606060" stroke-width="1"/>
<line x1="655.1" y1="716" x2="655.1" y2="718" stroke="#606060" stroke-width="1"/>
<line x1="668.6" y1="716" x2="668.6" y2="718" stroke="#606060" stroke-width="1"/>
<line x1="682.1" y1="716" x2="682.1" y2="718" stroke="#606060" stroke-width="1"/>
<line x1="695.6" y1="716" x2="695.6" y2="719.6" stroke="#606060" stroke-width="1"/>
<line x1="709.0" y1="716" x2="709.0" y2="718" stroke="#606060" stroke-width="1"/>
<line x1="722.5" y1="716" x2="722.5" y2="718" stroke="#606060" stroke-width="1"/>
<line x1="736.0" y1="716" x2="736.0" y2="718" stroke="#606060" stroke-width="1"/>
<line x1="749.5" y1="716" x2="749.5" y2="719.6" stroke="#606060" stroke-width="1"/>
<line x1="763.0" y1="716" x2="763.0" y2="718" stroke="#606060" stroke-width="1"/>
<line x1="776.5" y1="716" x2="776.5" y2="718" stroke="#606060" stroke-width="1"/>
<line x1="789.9" y1="716" x2="789.9" y2="718" stroke="#606060" stroke-width="1"/>
<line x1="803.4" y1="716" x2="803.4" y2="719.6" stroke="#606060" stroke-width="1"/>
<line x1="816.9" y1="716" x2="816.9" y2="718" stroke="#606060" stroke-width="1"/>
<line x1="830.4" y1="716" x2="830.4" y2="718" stroke="#606060" stroke-width="1"/>
<line x1="843.9" y1="716" x2="843.9" y2="718" stroke="#606060" stroke-width="1"/>
<text x="63" y="708.9" text-anchor="end">2 940</text>
<text x="63" y="694.5" text-anchor="end">2 960</text>
<text x="63" y="680.1" text-anchor="end">2 980</text>
<text x="63" y="665.7" text-anchor="end">3 000</text>
<text x="63" y="651.3" text-anchor="end">3 020</text>
<text x="63" y="636.8" text-anchor="end">3 040</text>
<text x="63" y="622.4" text-anchor="end">3 060</text>
<text x="63" y="608.0" text-anchor="end">3 080</text>
<text x="63" y="593.6" text-anchor="end">3 100</text>
<text x="63" y="579.2" text-anchor="end">3 120</text>
<text x="101.3" y="733" text-anchor="middle">500</text>
<text x="155.3" y="733" text-anchor="middle">1 000</text>
<text x="209.2" y="733" text-anchor="middle">1 500</text>
<text x="263.1" y="733" text-anchor="middle">2 000</text>
<text x="317.0" y="733" text-anchor="middle">2 500</text>
<text x="371.0" y="733" text-anchor="middle">3 000</text>
<text x="424.9" y="733" text-anchor="middle">3 500</text>
<text x="478.8" y="733" text-anchor="middle">4 000</text>
<text x="532.8" y="733" text-anchor="middle">4 500</text>
<text x="586.7" y="733" text-anchor="middle">5 000</text>
<text x="640.6" y="733" text-anchor="middle">5 500</text>
<text x="694.6" y="733" text-anchor="middle">6 000</text>
<text x="748.5" y="733" text-anchor="middle">6 500</text>
<text x="802.4" y="733" text-anchor="middle">7 000</text>
<rect x="72" y="757" width="784" height="146" fill="#f0f0f0"/>
<line x1="72" y1="893.3" x2="856" y2="893.3" stroke="#b8b8b8" stroke-width="1"/>
<line x1="72" y1="879.2" x2="856" y2="879.2" stroke="#b8b8b8" stroke-width="1"/>
<line x1="72" y1="865.1" x2="856" y2="865.1" stroke="#b8b8b8" stroke-width="1"/>
<line x1="72" y1="851.0" x2="856" y2="851.0" stroke="#b8b8b8" stroke-width="1"/>
<line x1="72" y1="836.9" x2="856" y2="836.9" stroke="#b8b8b8" stroke-width="1"/>
<line x1="72" y1="822.9" x2="856" y2="822.9" stroke="#b8b8b8" stroke-width="1"/>
<line x1="72" y1="808.8" x2="856" y2="808.8" stroke="#b8b8b8" stroke-width="1"/>
<line x1="72" y1="794.7" x2="856" y2="794.7" stroke="#b8b8b8" stroke-width="1"/>
<line x1="72" y1="780.6" x2="856" y2="780.6" stroke="#b8b8b8" stroke-width="1"/>
<line x1="72" y1="766.5" x2="856" y2="766.5" stroke="#b8b8b8" stroke-width="1"/>
<line x1="138.7" y1="757" x2="138.7" y2="903" stroke="#b8b8b8" stroke-width="1"/>
<line x1="210.9" y1="757" x2="210.9" y2="903" stroke="#b8b8b8" stroke-width="1"/>
<line x1="283.1" y1="757" x2="283.1" y2="903" stroke="#b8b8b8" stroke-width="1"/>
<line x1="355.3" y1="757" x2="355.3" y2="903" stroke="#b8b8b8" stroke-width="1"/>
<line x1="427.5" y1="757" x2="427.5" y2="903" stroke="#b8b8b8" stroke-width="1"/>
<line x1="499.7" y1="757" x2="499.7" y2="903" stroke="#b8b8b8" stroke-width="1"/>
<line x1="571.9" y1="757" x2="571.9" y2="903" stroke="#b8b8b8" stroke-width="1"/>
<line x1="644.1" y1="757" x2="644.1" y2="903" stroke="#b8b8b8" stroke-width="1"/>
<line x1="716.3" y1="757" x2="716.3" y2="903" stroke="#b8b8b8" stroke-width="1"/>
<line x1="788.5" y1="757" x2="788.5" y2="903" stroke="#b8b8b8" stroke-width="1"/>
<line x1="75.6" y1="866.3" x2="854" y2="866.3" stroke="#e88a58" stroke-width="1.5" stroke-dasharray="18,5.8"/>
<path d="M76.0,888.4 L78.0,888.3 L80.0,888.2 L82.0,888.3 L84.0,888.1 L86.0,887.8 L88.0,887.9 L90.0,888.1 L92.0,887.8 L94.0,887.8 L96.0,887.6 L98.0,887.7 L100.0,887.6 L102.0,887.6 L104.0,887.9 L106.0,888.4 L108.0,888.3 L110.0,888.2 L112.0,888.3 L114.0,887.7 L116.0,887.5 L118.0,887.1 L120.0,886.8 L122.0,886.9 L124.0,886.8 L126.0,886.8 L128.0,887.0 L130.0,887.3 L132.0,887.4 L134.0,887.7 L136.0,887.7 L138.0,887.8 L140.0,887.5 L142.0,887.3 L144.0,887.5 L146.0,887.7 L148.0,887.8 L150.0,887.8 L152.0,887.8 L154.0,887.3 L156.0,886.8 L158.0,886.3 L160.0,886.3 L162.0,886.3 L164.0,886.5 L166.0,886.5 L168.0,886.9 L170.0,886.8 L172.0,886.5 L174.0,886.1 L176.0,886.2 L178.0,885.9 L180.0,885.8 L182.0,885.9 L184.0,885.7 L186.0,885.4 L188.0,885.4 L190.0,884.9 L192.0,884.5 L194.0,884.5 L196.0,884.5 L198.0,884.3 L200.0,884.0 L202.0,883.9 L204.0,883.6 L206.0,882.9 L208.0,882.7 L210.0,882.5 L212.0,882.4 L214.0,882.3 L216.0,882.1 L218.0,881.8 L220.0,881.5 L222.0,881.3 L224.0,880.8 L226.0,880.6 L228.0,879.9 L230.0,879.7 L232.0,879.5 L234.0,879.5 L236.0,879.0 L238.0,879.0 L240.0,878.6 L242.0,877.8 L244.0,877.4 L246.0,877.2 L248.0,876.5 L250.0,876.7 L252.0,876.3 L254.0,875.7 L256.0,875.4 L258.0,875.2 L260.0,874.5 L262.0,874.0 L264.0,873.5 L266.0,873.0 L268.0,872.5 L270.0,872.3 L272.0,872.0 L274.0,871.7 L276.0,871.4 L278.0,871.0 L280.0,870.4 L282.0,870.1 L284.0,869.4 L286.0,868.2 L288.0,867.6 L290.0,866.9 L292.0,866.1 L294.0,865.7 L296.0,865.6 L298.0,865.0 L300.0,864.1 L302.0,863.9 L304.0,863.5 L306.0,862.7 L308.0,861.5 L310.0,860.5 L312.0,858.9 L314.0,857.8 L316.0,856.4 L318.0,855.2 L320.0,853.9 L322.0,852.9 L324.0,851.2 L326.0,849.6 L328.0,847.6 L330.0,846.1 L332.0,844.0 L334.0,842.0 L336.0,840.5 L338.0,839.6 L340.0,838.2 L342.0,836.5 L344.0,835.1 L346.0,833.2 L348.0,830.9 L350.0,828.9 L352.0,827.2 L354.0,824.9 L356.0,823.1 L358.0,821.6 L360.0,820.0 L362.0,818.1 L364.0,816.5 L366.0,815.2 L368.0,813.8 L370.0,812.2 L372.0,810.9 L374.0,809.4 L376.0,807.4 L378.0,805.3 L380.0,803.4 L382.0,802.1 L384.0,800.7 L386.0,799.7 L388.0,798.3 L390.0,797.4 L392.0,795.8 L394.0,794.6 L396.0,793.0 L398.0,792.3 L400.0,790.8 L402.0,789.8 L404.0,788.7 L406.0,788.0 L408.0,786.8 L410.0,786.2 L412.0,785.3 L414.0,784.5 L416.0,783.3 L418.0,782.4 L420.0,781.7 L422.0,780.6 L424.0,779.1 L426.0,778.2 L428.0,777.2 L430.0,776.0 L432.0,774.8 L434.0,773.7 L436.0,772.6 L438.0,771.5 L440.0,770.4 L442.0,769.5 L444.0,769.0 L446.0,768.4 L448.0,768.4 L450.0,768.5 L452.0,768.6 L454.0,768.4 L456.0,768.1 L458.0,768.2 L460.0,768.0 L462.0,768.0 L464.0,767.7 L466.0,767.8 L468.0,767.6 L470.0,767.7 L472.0,767.7 L474.0,767.9 L476.0,767.9 L478.0,768.2 L480.0,768.2 L482.0,767.8 L484.0,767.7 L486.0,767.7 L488.0,767.3 L490.0,767.3 L492.0,767.8 L494.0,768.0 L496.0,767.8 L498.0,768.2 L500.0,768.3 L502.0,768.2 L504.0,767.9 L506.0,767.9 L508.0,767.9 L510.0,768.2 L512.0,768.3 L514.0,768.4 L516.0,768.6 L518.0,769.1 L520.0,769.5 L522.0,770.2 L524.0,771.3 L526.0,772.4 L528.0,773.6 L530.0,775.1 L532.0,776.0 L534.0,776.7 L536.0,777.6 L538.0,778.5 L540.0,779.3 L542.0,780.2 L544.0,781.4 L546.0,782.3 L548.0,783.3 L550.0,784.7 L552.0,786.0 L554.0,787.0 L556.0,787.8 L558.0,788.7 L560.0,789.9 L562.0,790.5 L564.0,791.8 L566.0,793.3 L568.0,794.6 L570.0,795.8 L572.0,797.0 L574.0,798.0 L576.0,799.2 L578.0,800.4 L580.0,801.7 L582.0,803.2 L584.0,804.6 L586.0,805.7 L588.0,807.5 L590.0,808.7 L592.0,810.3 L594.0,812.1 L596.0,813.9 L598.0,815.6 L600.0,817.2 L602.0,818.5 L604.0,819.9 L606.0,821.0 L608.0,822.0 L610.0,823.4 L612.0,825.2 L614.0,826.6 L616.0,828.2 L618.0,829.9 L620.0,831.5 L622.0,833.0 L624.0,834.7 L626.0,836.5 L628.0,838.1 L630.0,839.7 L632.0,841.4 L634.0,842.6 L636.0,844.2 L638.0,845.9 L640.0,847.0 L642.0,848.3 L644.0,850.0 L646.0,851.5 L648.0,852.7 L650.0,854.4 L652.0,856.0 L654.0,857.5 L656.0,858.9 L658.0,860.3 L660.0,861.7 L662.0,862.3 L664.0,863.2 L666.0,864.1 L668.0,865.1 L670.0,866.1 L672.0,867.0 L674.0,868.0 L676.0,868.9 L678.0,869.9 L680.0,870.6 L682.0,872.0 L684.0,872.7 L686.0,873.6 L688.0,874.6 L690.0,875.4 L692.0,876.0 L694.0,877.0 L696.0,877.7 L698.0,878.5 L700.0,879.4 L702.0,880.2 L704.0,881.3 L706.0,881.8 L708.0,882.6 L710.0,883.2 L712.0,884.2 L714.0,884.9 L716.0,885.7 L718.0,886.0 L720.0,886.9 L722.0,887.6 L724.0,888.0 L726.0,888.7 L728.0,889.6 L730.0,889.9 L732.0,890.4 L734.0,890.3 L736.0,890.4 L738.0,890.5 L740.0,890.7 L742.0,890.9 L744.0,891.5 L746.0,891.9 L748.0,892.4 L750.0,892.8 L752.0,892.8 L754.0,892.9 L756.0,893.3 L758.0,893.6 L760.0,893.6 L762.0,894.1 L764.0,894.6 L766.0,894.6 L768.0,894.6 L770.0,894.7 L772.0,894.7 L774.0,894.6 L776.0,894.8 L778.0,894.7 L780.0,895.2 L782.0,895.3 L784.0,895.4 L786.0,895.6 L788.0,896.0 L790.0,895.9 L792.0,896.1 L794.0,896.0 L796.0,895.9 L798.0,895.9 L800.0,896.3 L802.0,896.5 L804.0,896.7 L806.0,896.7 L808.0,896.6 L810.0,896.4 L812.0,896.4 L814.0,896.8 L816.0,896.8 L818.0,897.0 L820.0,896.9 L822.0,896.9 L824.0,896.9 L826.0,896.8 L828.0,897.1 L830.0,897.0 L832.0,896.8 L834.0,896.4 L836.0,896.8 L838.0,896.6 L840.0,896.8 L842.0,897.0 L844.0,897.0 L846.0,897.0 L848.0,897.0 L850.0,897.0 L852.0,896.8" fill="none" stroke="#7a22c8" stroke-width="1.3"/>
<path d="M76.0,892.5 L78.0,892.5 L80.0,892.5 L82.0,892.5 L84.0,892.5 L86.0,892.5 L88.0,892.5 L90.0,892.5 L92.0,892.4 L94.0,892.4 L96.0,892.4 L98.0,892.4 L100.0,892.4 L102.0,892.4 L104.0,892.4 L106.0,892.3 L108.0,892.3 L110.0,892.3 L112.0,892.3 L114.0,892.3 L116.0,892.2 L118.0,892.2 L120.0,892.2 L122.0,892.2 L124.0,892.1 L126.0,892.1 L128.0,892.1 L130.0,892.1 L132.0,892.0 L134.0,892.0 L136.0,891.9 L138.0,891.9 L140.0,891.9 L142.0,891.8 L144.0,891.8 L146.0,891.7 L148.0,891.7 L150.0,891.6 L152.0,891.5 L154.0,891.5 L156.0,891.4 L158.0,891.3 L160.0,891.3 L162.0,891.2 L164.0,891.1 L166.0,891.0 L168.0,890.9 L170.0,890.8 L172.0,890.7 L174.0,890.6 L176.0,890.5 L178.0,890.4 L180.0,890.3 L182.0,890.1 L184.0,890.0 L186.0,889.9 L188.0,889.7 L190.0,889.6 L192.0,889.4 L194.0,889.2 L196.0,889.1 L198.0,888.9 L200.0,888.7 L202.0,888.5 L204.0,888.3 L206.0,888.1 L208.0,887.8 L210.0,887.6 L212.0,887.3 L214.0,887.1 L216.0,886.8 L218.0,886.5 L220.0,886.3 L222.0,885.9 L224.0,885.6 L226.0,885.3 L228.0,885.0 L230.0,884.6 L232.0,884.3 L234.0,883.9 L236.0,883.5 L238.0,883.1 L240.0,882.7 L242.0,882.2 L244.0,881.8 L246.0,881.3 L248.0,880.8 L250.0,880.4 L252.0,879.8 L254.0,879.3 L256.0,878.8 L258.0,878.2 L260.0,877.6 L262.0,877.0 L264.0,876.4 L266.0,875.8 L268.0,875.1 L270.0,874.5 L272.0,873.8 L274.0,873.0 L276.0,872.3 L278.0,871.6 L280.0,870.8 L282.0,870.0 L284.0,869.2 L286.0,868.4 L288.0,867.5 L290.0,866.6 L292.0,865.8 L294.0,864.8 L296.0,863.9 L298.0,862.9 L300.0,862.0 L302.0,861.0 L304.0,860.0 L306.0,858.9 L308.0,857.9 L310.0,856.8 L312.0,855.7 L314.0,854.6 L316.0,853.4 L318.0,852.3 L320.0,851.1 L322.0,849.9 L324.0,848.7 L326.0,847.4 L328.0,846.2 L330.0,844.9 L332.0,843.6 L334.0,842.3 L336.0,841.0 L338.0,839.6 L340.0,838.3 L342.0,836.9 L344.0,835.5 L346.0,834.1 L348.0,832.7 L350.0,831.3 L352.0,829.8 L354.0,828.4 L356.0,826.9 L358.0,825.5 L360.0,824.0 L362.0,822.5 L364.0,821.0 L366.0,819.5 L368.0,818.0 L370.0,816.5 L372.0,815.0 L374.0,813.5 L376.0,812.0 L378.0,810.5 L380.0,809.0 L382.0,807.5 L384.0,806.0 L386.0,804.5 L388.0,803.0 L390.0,801.6 L392.0,800.1 L394.0,798.6 L396.0,797.2 L398.0,795.7 L400.0,794.3 L402.0,792.9 L404.0,791.5 L406.0,790.1 L408.0,788.8 L410.0,787.4 L412.0,786.1 L414.0,784.8 L416.0,783.6 L418.0,782.3 L420.0,781.1 L422.0,779.9 L424.0,778.7 L426.0,777.6 L428.0,776.5 L430.0,775.4 L432.0,774.3 L434.0,773.3 L436.0,772.3 L438.0,771.4 L440.0,770.5 L442.0,769.6 L444.0,768.8 L446.0,768.0 L448.0,767.2 L450.0,766.5 L452.0,765.8 L454.0,765.2 L456.0,764.6 L458.0,764.1 L460.0,763.6 L462.0,763.1 L464.0,762.7 L466.0,762.3 L468.0,762.0 L470.0,761.7 L472.0,761.5 L474.0,761.3 L476.0,761.1 L478.0,761.1 L480.0,761.0 L482.0,761.0 L484.0,761.1 L486.0,761.1 L488.0,761.3 L490.0,761.5 L492.0,761.7 L494.0,762.0 L496.0,762.3 L498.0,762.7 L500.0,763.1 L502.0,763.6 L504.0,764.1 L506.0,764.6 L508.0,765.2 L510.0,765.8 L512.0,766.5 L514.0,767.2 L516.0,768.0 L518.0,768.8 L520.0,769.6 L522.0,770.5 L524.0,771.4 L526.0,772.3 L528.0,773.3 L530.0,774.3 L532.0,775.4 L534.0,776.5 L536.0,777.6 L538.0,778.7 L540.0,779.9 L542.0,781.1 L544.0,782.3 L546.0,783.6 L548.0,784.8 L550.0,786.1 L552.0,787.4 L554.0,788.8 L556.0,790.1 L558.0,791.5 L560.0,792.9 L562.0,794.3 L564.0,795.7 L566.0,797.2 L568.0,798.6 L570.0,800.1 L572.0,801.6 L574.0,803.0 L576.0,804.5 L578.0,806.0 L580.0,807.5 L582.0,809.0 L584.0,810.5 L586.0,812.0 L588.0,813.5 L590.0,815.0 L592.0,816.5 L594.0,818.0 L596.0,819.5 L598.0,821.0 L600.0,822.5 L602.0,824.0 L604.0,825.5 L606.0,826.9 L608.0,828.4 L610.0,829.8 L612.0,831.3 L614.0,832.7 L616.0,834.1 L618.0,835.5 L620.0,836.9 L622.0,838.3 L624.0,839.6 L626.0,841.0 L628.0,842.3 L630.0,843.6 L632.0,844.9 L634.0,846.2 L636.0,847.4 L638.0,848.7 L640.0,849.9 L642.0,851.1 L644.0,852.3 L646.0,853.4 L648.0,854.6 L650.0,855.7 L652.0,856.8 L654.0,857.9 L656.0,858.9 L658.0,860.0 L660.0,861.0 L662.0,862.0 L664.0,862.9 L666.0,863.9 L668.0,864.8 L670.0,865.8 L672.0,866.6 L674.0,867.5 L676.0,868.4 L678.0,869.2 L680.0,870.0 L682.0,870.8 L684.0,871.6 L686.0,872.3 L688.0,873.0 L690.0,873.8 L692.0,874.5 L694.0,875.1 L696.0,875.8 L698.0,876.4 L700.0,877.0 L702.0,877.6 L704.0,878.2 L706.0,878.8 L708.0,879.3 L710.0,879.8 L712.0,880.4 L714.0,880.8 L716.0,881.3 L718.0,881.8 L720.0,882.2 L722.0,882.7 L724.0,883.1 L726.0,883.5 L728.0,883.9 L730.0,884.3 L732.0,884.6 L734.0,885.0 L736.0,885.3 L738.0,885.6 L740.0,885.9 L742.0,886.3 L744.0,886.5 L746.0,886.8 L748.0,887.1 L750.0,887.3 L752.0,887.6 L754.0,887.8 L756.0,888.1 L758.0,888.3 L760.0,888.5 L762.0,888.7 L764.0,888.9 L766.0,889.1 L768.0,889.2 L770.0,889.4 L772.0,889.6 L774.0,889.7 L776.0,889.9 L778.0,890.0 L780.0,890.1 L782.0,890.3 L784.0,890.4 L786.0,890.5 L788.0,890.6 L790.0,890.7 L792.0,890.8 L794.0,890.9 L796.0,891.0 L798.0,891.1 L800.0,891.2 L802.0,891.3 L804.0,891.3 L806.0,891.4 L808.0,891.5 L810.0,891.5 L812.0,891.6 L814.0,891.7 L816.0,891.7 L818.0,891.8 L820.0,891.8 L822.0,891.9 L824.0,891.9 L826.0,891.9 L828.0,892.0 L830.0,892.0 L832.0,892.1 L834.0,892.1 L836.0,892.1 L838.0,892.1 L840.0,892.2 L842.0,892.2 L844.0,892.2 L846.0,892.2 L848.0,892.3 L850.0,892.3 L852.0,892.3" fill="none" stroke="#1a7fe6" stroke-width="4" stroke-linejoin="round"/>
<rect x="72.5" y="757.5" width="783" height="145" fill="none" stroke="#000" stroke-width="1.6"/>
<line x1="73" y1="757" x2="73" y2="904" stroke="#000" stroke-width="3"/>
<line x1="72" y1="902.7" x2="857" y2="902.7" stroke="#000" stroke-width="2.2"/>
<line x1="67" y1="893.3" x2="72" y2="893.3" stroke="#707070" stroke-width="1"/>
<line x1="67" y1="879.2" x2="72" y2="879.2" stroke="#707070" stroke-width="1"/>
<line x1="67" y1="865.1" x2="72" y2="865.1" stroke="#707070" stroke-width="1"/>
<line x1="67" y1="851.0" x2="72" y2="851.0" stroke="#707070" stroke-width="1"/>
<line x1="67" y1="836.9" x2="72" y2="836.9" stroke="#707070" stroke-width="1"/>
<line x1="67" y1="822.9" x2="72" y2="822.9" stroke="#707070" stroke-width="1"/>
<line x1="67" y1="808.8" x2="72" y2="808.8" stroke="#707070" stroke-width="1"/>
<line x1="67" y1="794.7" x2="72" y2="794.7" stroke="#707070" stroke-width="1"/>
<line x1="67" y1="780.6" x2="72" y2="780.6" stroke="#707070" stroke-width="1"/>
<line x1="67" y1="766.5" x2="72" y2="766.5" stroke="#707070" stroke-width="1"/>
<line x1="70.5" y1="759" x2="70.5" y2="903" stroke="#909090" stroke-width="1" stroke-dasharray="2,1.6"/>
<line x1="84.6" y1="904" x2="84.6" y2="906" stroke="#606060" stroke-width="1"/>
<line x1="102.6" y1="904" x2="102.6" y2="906" stroke="#606060" stroke-width="1"/>
<line x1="120.7" y1="904" x2="120.7" y2="906" stroke="#606060" stroke-width="1"/>
<line x1="138.7" y1="904" x2="138.7" y2="907.6" stroke="#606060" stroke-width="1"/>
<line x1="156.8" y1="904" x2="156.8" y2="906" stroke="#606060" stroke-width="1"/>
<line x1="174.8" y1="904" x2="174.8" y2="906" stroke="#606060" stroke-width="1"/>
<line x1="192.9" y1="904" x2="192.9" y2="906" stroke="#606060" stroke-width="1"/>
<line x1="210.9" y1="904" x2="210.9" y2="907.6" stroke="#606060" stroke-width="1"/>
<line x1="229.0" y1="904" x2="229.0" y2="906" stroke="#606060" stroke-width="1"/>
<line x1="247.0" y1="904" x2="247.0" y2="906" stroke="#606060" stroke-width="1"/>
<line x1="265.1" y1="904" x2="265.1" y2="906" stroke="#606060" stroke-width="1"/>
<line x1="283.1" y1="904" x2="283.1" y2="907.6" stroke="#606060" stroke-width="1"/>
<line x1="301.2" y1="904" x2="301.2" y2="906" stroke="#606060" stroke-width="1"/>
<line x1="319.2" y1="904" x2="319.2" y2="906" stroke="#606060" stroke-width="1"/>
<line x1="337.2" y1="904" x2="337.2" y2="906" stroke="#606060" stroke-width="1"/>
<line x1="355.3" y1="904" x2="355.3" y2="907.6" stroke="#606060" stroke-width="1"/>
<line x1="373.4" y1="904" x2="373.4" y2="906" stroke="#606060" stroke-width="1"/>
<line x1="391.4" y1="904" x2="391.4" y2="906" stroke="#606060" stroke-width="1"/>
<line x1="409.5" y1="904" x2="409.5" y2="906" stroke="#606060" stroke-width="1"/>
<line x1="427.5" y1="904" x2="427.5" y2="907.6" stroke="#606060" stroke-width="1"/>
<line x1="445.6" y1="904" x2="445.6" y2="906" stroke="#606060" stroke-width="1"/>
<line x1="463.6" y1="904" x2="463.6" y2="906" stroke="#606060" stroke-width="1"/>
<line x1="481.7" y1="904" x2="481.7" y2="906" stroke="#606060" stroke-width="1"/>
<line x1="499.7" y1="904" x2="499.7" y2="907.6" stroke="#606060" stroke-width="1"/>
<line x1="517.8" y1="904" x2="517.8" y2="906" stroke="#606060" stroke-width="1"/>
<line x1="535.8" y1="904" x2="535.8" y2="906" stroke="#606060" stroke-width="1"/>
<line x1="553.9" y1="904" x2="553.9" y2="906" stroke="#606060" stroke-width="1"/>
<line x1="571.9" y1="904" x2="571.9" y2="907.6" stroke="#606060" stroke-width="1"/>
<line x1="590.0" y1="904" x2="590.0" y2="906" stroke="#606060" stroke-width="1"/>
<line x1="608.0" y1="904" x2="608.0" y2="906" stroke="#606060" stroke-width="1"/>
<line x1="626.0" y1="904" x2="626.0" y2="906" stroke="#606060" stroke-width="1"/>
<line x1="644.1" y1="904" x2="644.1" y2="907.6" stroke="#606060" stroke-width="1"/>
<line x1="662.2" y1="904" x2="662.2" y2="906" stroke="#606060" stroke-width="1"/>
<line x1="680.2" y1="904" x2="680.2" y2="906" stroke="#606060" stroke-width="1"/>
<line x1="698.2" y1="904" x2="698.2" y2="906" stroke="#606060" stroke-width="1"/>
<line x1="716.3" y1="904" x2="716.3" y2="907.6" stroke="#606060" stroke-width="1"/>
<line x1="734.4" y1="904" x2="734.4" y2="906" stroke="#606060" stroke-width="1"/>
<line x1="752.4" y1="904" x2="752.4" y2="906" stroke="#606060" stroke-width="1"/>
<line x1="770.5" y1="904" x2="770.5" y2="906" stroke="#606060" stroke-width="1"/>
<line x1="788.5" y1="904" x2="788.5" y2="907.6" stroke="#606060" stroke-width="1"/>
<line x1="806.6" y1="904" x2="806.6" y2="906" stroke="#606060" stroke-width="1"/>
<line x1="824.6" y1="904" x2="824.6" y2="906" stroke="#606060" stroke-width="1"/>
<line x1="842.6" y1="904" x2="842.6" y2="906" stroke="#606060" stroke-width="1"/>
<text x="63" y="897.3" text-anchor="end">2 940</text>
<text x="63" y="883.2" text-anchor="end">2 960</text>
<text x="63" y="869.1" text-anchor="end">2 980</text>
<text x="63" y="855.0" text-anchor="end">3 000</text>
<text x="63" y="840.9" text-anchor="end">3 020</text>
<text x="63" y="826.9" text-anchor="end">3 040</text>
<text x="63" y="812.8" text-anchor="end">3 060</text>
<text x="63" y="798.7" text-anchor="end">3 080</text>
<text x="63" y="784.6" text-anchor="end">3 100</text>
<text x="63" y="770.5" text-anchor="end">3 120</text>
<text x="138.7" y="921" text-anchor="middle">-4 500</text>
<text x="210.9" y="921" text-anchor="middle">-4 000</text>
<text x="283.1" y="921" text-anchor="middle">-3 500</text>
<text x="355.3" y="921" text-anchor="middle">-3 000</text>
<text x="427.5" y="921" text-anchor="middle">-2 500</text>
<text x="499.7" y="921" text-anchor="middle">-2 000</text>
<text x="571.9" y="921" text-anchor="middle">-1 500</text>
<text x="644.1" y="921" text-anchor="middle">-1 000</text>
<text x="716.3" y="921" text-anchor="middle">-500</text>
<text x="788.5" y="921" text-anchor="middle">0</text>
</svg>
</body></html>
